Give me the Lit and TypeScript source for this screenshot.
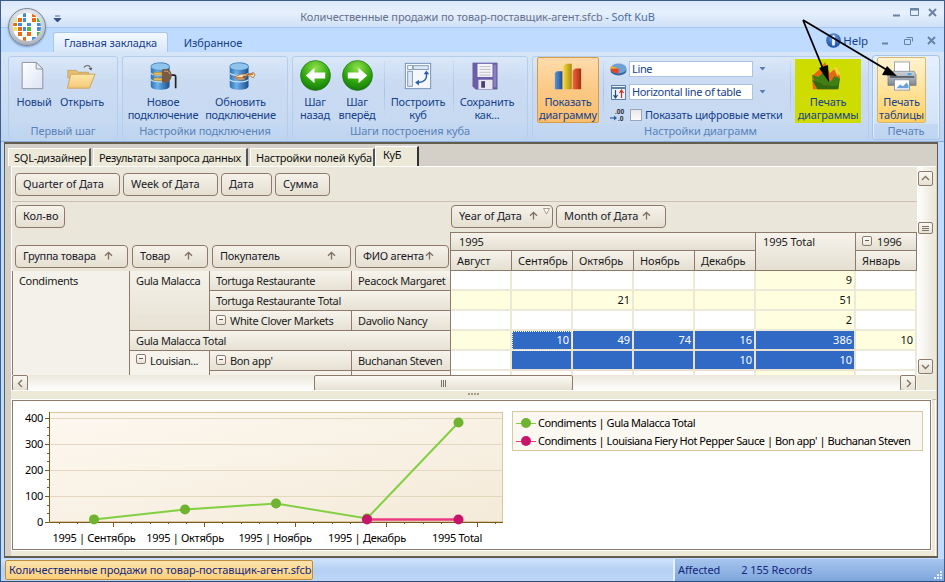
import { LitElement, html, css, svg } from "lit";
import { customElement } from "lit/decorators.js";

const icoNew = html`<svg class="ico" viewBox="0 0 32 32"><defs><linearGradient id="dg" x1="0" y1="0" x2="1" y2="1"><stop offset="0" stop-color="#fff"/><stop offset="1" stop-color="#dbe4f4"/></linearGradient></defs><path d="M5.5 1.5h15l7 7v21h-22z" fill="url(#dg)" stroke="#8a8f9a"/><path d="M20.5 1.5v7h7z" fill="#e8edf6" stroke="#8a8f9a"/></svg>`;
const icoOpen = html`<svg class="ico" viewBox="0 0 32 32"><defs><linearGradient id="fg" x1="0" y1="0" x2="0" y2="1"><stop offset="0" stop-color="#ffe7a8"/><stop offset="1" stop-color="#f3c877"/></linearGradient></defs><path d="M2 10h9l2 2h11v6H2z" fill="#e9bf6f" stroke="#c9a25e"/><path d="M5 14h26l-6 15H1.500z" fill="url(#fg)" stroke="#c9a25e"/><path d="M19 7c2-3 6-3 7 0" fill="none" stroke="#666" stroke-width="1.200"/><path d="M24 8l4-1-1 3z" fill="#555"/></svg>`;
const cyl = svg`<path d="M3 6c0-6 20-6 20 0v21c0 5-20 5-20 0z" fill="url(#cy)"/><ellipse cx="13" cy="6" rx="10" ry="4" fill="#8fc4ef" stroke="#2e6ca8" stroke-width=".5"/><path d="M3 13c4 3 16 3 20 0M3 20c4 3 16 3 20 0" fill="none" stroke="#cfe6fa" stroke-width="1.200"/>`;
const cyDefs = svg`<defs><linearGradient id="cy" x1="0" y1="0" x2="1" y2="0"><stop offset="0" stop-color="#2d71b5"/><stop offset=".35" stop-color="#6db1ea"/><stop offset="1" stop-color="#174f90"/></linearGradient></defs>`;
const icoPlug = html`<svg class="ico" viewBox="0 0 32 32">${cyDefs}${cyl}<path d="M6 12h9v3H6zM6 18h9v3H6z" fill="#e6bd5c" stroke="#8c6a1e" stroke-width=".5"/><path d="M15 9c8-2 11 3 10 8s-5 7-10 6z" fill="#7b5a42"/><path d="M17 11c4-1 6 1 6 3" fill="none" stroke="#c9ab90"/><path d="M25 15h3c1 0 1.500 1 1.500 2v12" fill="none" stroke="#222" stroke-width="1.800"/></svg>`;
const icoSync = html`<svg class="ico" viewBox="0 0 32 32">${cyDefs}<g transform="translate(1 0)">${cyl}</g><path d="M9 17l7-3h10l3-2 2 3-2 3-3-2H18l2 4-7 0-4-3z" fill="#f0e3c8" stroke="#a0622a" stroke-width=".8"/><path d="M11 18h9l4-4h5" fill="none" stroke="#b35c1e" stroke-width="1.300"/></svg>`;
const arrowBall = (dir: number) => html`<svg class="ball" viewBox="0 0 32 32"><defs><radialGradient id="b${dir}" cx=".5" cy=".25" r=".85"><stop offset="0" stop-color="#8fe04a"/><stop offset=".55" stop-color="#2ea50e"/><stop offset="1" stop-color="#0c6a08"/></radialGradient></defs><circle cx="16" cy="16" r="15.500" fill="url(#b${dir})" stroke="#1a6a14" stroke-width=".6"/><path d="M${dir < 0 ? "6 16l9-8v5h11v6H15v5z" : "26 16l-9-8v5H6v6h11v5z"}" fill="#fff"/></svg>`;
const icoBuild = html`<svg class="ico" viewBox="0 0 32 32"><rect x="2.500" y="2.500" width="27" height="27" fill="#f4f8fe" stroke="#6f8db5"/><rect x="5" y="5" width="5" height="4" fill="#fff" stroke="#7f97b8"/><rect x="11" y="5" width="16" height="4" fill="#dce8f7" stroke="#7f97b8"/><rect x="5" y="11" width="5" height="16" fill="#dce8f7" stroke="#7f97b8"/><path d="M25 13c1 7-3 10-9 10" fill="none" stroke="#2a5ea8" stroke-width="1.600"/><path d="M25 10l-3 4h6zM13 23l4-3v6z" fill="#2a5ea8"/></svg>`;
const icoSave = html`<svg class="ico" viewBox="0 0 32 32"><path d="M3 2h26v28H6l-3-3z" fill="#6a5fa8" stroke="#5b5090" stroke-width=".5"/><rect x="8" y="3" width="16" height="14" fill="#f5f5f8"/><path d="M10 6h12M10 9h12M10 12h12M10 15h12" stroke="#b9b9c6"/><rect x="9" y="20" width="15" height="10" fill="#e6e6ee"/><rect x="12" y="21.500" width="4" height="7" fill="#4a4070"/><rect x="25" y="4" width="3" height="24" fill="#8a7fc0"/></svg>`;
const icoBars = html`<svg class="ico" viewBox="0 0 32 32"><defs><linearGradient id="bb" x1="0" x2="1"><stop offset="0" stop-color="#5a94d6"/><stop offset="1" stop-color="#1f4f90"/></linearGradient><linearGradient id="by" x1="0" x2="1"><stop offset="0" stop-color="#f6d83a"/><stop offset="1" stop-color="#a98a10"/></linearGradient><linearGradient id="br" x1="0" x2="1"><stop offset="0" stop-color="#ef6a3a"/><stop offset="1" stop-color="#a82b10"/></linearGradient></defs><path d="M2 13l2-2h6v19H2z" fill="url(#bb)"/><path d="M11 5l3-2h6v27h-9z" fill="url(#by)"/><path d="M21 10l3-2h6v22h-9z" fill="url(#br)"/></svg>`;
const icoMount = html`<svg class="ico" viewBox="0 0 32 32"><path d="M10 8l5-7 5 12 6-5 5 9-5 13H2L1 16z" fill="#e36a12"/><path d="M24 7l3-1 4 7-3 3z" fill="#f5d23a"/><path d="M1 15l7 2 5-5 8 10 4-6 6 3-2 11-5-1-9-4-10-1z" fill="#3f7f14"/><path d="M1 20l12 5 10 2 5-1 2-5-1 9H7z" fill="#2f6a10"/></svg>`;
const icoPrint = html`<svg class="ico" viewBox="0 0 32 32"><defs><linearGradient id="pg" x1="0" y1="0" x2="0" y2="1"><stop offset="0" stop-color="#cfd3d8"/><stop offset="1" stop-color="#7c8590"/></linearGradient></defs><rect x="8" y="1" width="16" height="11" fill="#fff" stroke="#9aa1aa"/><path d="M3 11h26l2 4v11H1V15z" fill="url(#pg)" stroke="#676e78" stroke-width=".6"/><rect x="3" y="16" width="26" height="2" fill="#59616b"/><rect x="22" y="13" width="4" height="2" fill="#39a2e0"/><rect x="8" y="20" width="16" height="11" fill="#fff" stroke="#8a95a5"/><path d="M10 29l4-4 3 2 4-4 2 3v3z" fill="#6aa0d8"/></svg>`;
const icoPie = html`<svg class="mini" viewBox="0 0 17 13"><ellipse cx="8.500" cy="7.500" rx="8" ry="5" fill="#34689f"/><ellipse cx="8.500" cy="5.500" rx="8" ry="5" fill="#6f9fd4"/><path d="M8.500 5.500L.5 5.500a8 5 0 0 0 8 5z" fill="#e8431c"/><path d="M8.500 5.500L1.500 3a8 5 0 0 0-1 2.500z" fill="#f5b01c"/></svg>`;
const icoHoriz = html`<svg class="mini" viewBox="0 0 15 15"><rect x=".5" y=".5" width="14" height="14" fill="#eaf2fc" stroke="#5f7ea8"/><path d="M1 3h13" stroke="#5f7ea8" stroke-width="2"/><path d="M4.500 5v8M2.500 10l2 3 2-3" fill="none" stroke="#23498a" stroke-width="1.200"/><path d="M10.500 13V5M8.500 8l2-3 2 3" fill="none" stroke="#c92b1a" stroke-width="1.200"/></svg>`;
const icoDec = html`<svg class="mini" viewBox="0 0 17 15"><text x="5" y="6.500" class="dec">.00</text><text x="8" y="14" class="dec">.0</text><path d="M0 11h5" stroke="#2a5ea8" stroke-width="1.200"/><path d="M4 8.500l3 2.500-3 2.500z" fill="#2a5ea8"/></svg>`;
const icoInfo = html`<svg class="info" viewBox="0 0 15 15"><defs><radialGradient id="ig" cx=".5" cy=".3" r=".8"><stop offset="0" stop-color="#6ca4ea"/><stop offset="1" stop-color="#0f3e9a"/></radialGradient></defs><circle cx="7.500" cy="7.500" r="7.300" fill="url(#ig)"/><circle cx="7.500" cy="3.700" r="1.400" fill="#fff"/><rect x="6.200" y="6" width="2.600" height="6.500" fill="#fff"/></svg>`;
const dd = html`<svg class="dd" viewBox="0 0 7 6"><path d="M.5 1h6L3.500 4.500z" fill="#567db1"/></svg>`;
const up = html`<svg class="up" viewBox="0 0 9 9"><path d="M4.500 8.500V1.500M1 4.800l3.500-3.500L8 4.800" fill="none" stroke="#7d6f62" stroke-width="1.300"/></svg>`;
const minus = html`<span class="minus"></span>`;
const orbColors = ["#f6e05a", "#fff", "#3f8fd8", "#fff", "#e96a12", "#fff", "#f6e05a", "#e96a12", "#3f8fd8", "#fff", "#e96a12", "#4fb53a", "#e96a12", "#3f8fd8", "#fff", "#3f8fd8", "#fff", "#3f8fd8", "#f6e05a", "#e96a12", "#3f8fd8", "#4fb53a", "#fff", "#3f8fd8", "#fff", "#e96a12", "#fff", "#e96a12", "#fff", "#4fb53a", "#3f8fd8", "#fff", "#e96a12", "#fff", "#3f8fd8", "#fff"];

const item = (ic: unknown, a: string, b: string, cls = "") => html`<button class="rb ${cls}">${ic}<span class="lbl">${a}<br />${b}</span></button>`;
const sep = html`<i class="vsep"></i>`;
const gridRows: Array<Array<[string, string]>> = [
  [["", ""], ["", ""], ["", ""], ["", ""], ["", ""], ["9", "y"], ["", ""]],
  [["", "y"], ["", "y"], ["21", "y"], ["", "y"], ["", "y"], ["51", "y"], ["", "y"]],
  [["", ""], ["", ""], ["", ""], ["", ""], ["", ""], ["2", "y"], ["", ""]],
  [["", "y"], ["10", "s f"], ["49", "s"], ["74", "s"], ["16", "s"], ["386", "s"], ["10", "y"]],
  [["", ""], ["", "s"], ["", "s"], ["", "s"], ["10", "s"], ["10", "s"], ["", ""]],
  [["", ""], ["", ""], ["", ""], ["", ""], ["", ""], ["", "y"], ["", ""]],
];

@customElement("app-root")
export class AppRoot extends LitElement {
  static styles = css`
    :host { display: block; width: 945px; height: 582px; overflow: hidden; font: 11px/13px "Noto Sans", "Open Sans", sans-serif; letter-spacing: -.1px; color: #1c1c1c; }
    * { box-sizing: border-box; }
    button { font: inherit; letter-spacing: inherit; background: none; border: 0; padding: 0; color: inherit; }
    .win { position: relative; width: 945px; height: 582px; display: flex; flex-direction: column; background: #bfdbff; border: 1px solid #3d5d8a; border-bottom-color: #2c4c78; overflow: hidden; }
    .title { height: 27px; flex: none; display: flex; align-items: center; background: linear-gradient(#dbe8fa, #e6f0fd 45%, #cfe0f7); border-bottom: 1px solid #a9c8ef; }
    .title .t { flex: 1; text-align: center; padding: 5px 0 0 62px; color: #66708c; }
    .title .t b { font-weight: 400; color: #4d6f9f; }
    .qa { position: absolute; left: 52px; top: 14px; width: 9px; height: 9px; z-index: 3; }
    .ctl { display: flex; gap: 9px; padding: 0 7px 4px 0; }
    .ctl svg { width: 9px; height: 9px; display: block; }
    .orb { position: absolute; left: 7px; top: 7px; width: 38px; height: 38px; border-radius: 50%; background: radial-gradient(circle at 50% 30%, #fdfdfd, #c6cdd8 60%, #8a92a0); border: 1px solid #7d8794; display: grid; place-items: center; box-shadow: 0 1px 2px #7797c0; z-index: 3; }
    .orbin { width: 28px; height: 28px; display: grid; grid-template-columns: repeat(6, 1fr); grid-template-rows: repeat(6, 1fr); gap: 1px; border-radius: 50%; overflow: hidden; background: #fff; }
    .tabs { height: 24px; flex: none; display: flex; align-items: flex-end; padding-left: 52px; background: #bfdbff; position: relative; }
    .rtab { height: 20px; display: flex; align-items: center; justify-content: center; color: #15428b; }
    .rtab.on { width: 115px; color: #15428b; background: linear-gradient(#f4f9ff, #d9e7f9); border: 1px solid #a7c5ec; border-bottom: 0; border-radius: 3px 3px 0 0; }
    .rtab.off { width: 90px; margin-left: 0; }
    .help { margin-left: auto; align-self: center; display: flex; align-items: center; gap: 2px; color: #15428b; font-size: 11.500px; padding-right: 8px; padding-top: 1px; }
    .info { width: 15px; height: 15px; margin-right: 0; }
    .ctl2 { display: flex; gap: 14px; margin-left: 11px; }
    .ctl2 svg { width: 9px; height: 9px; display: block; }
    .ribbon { height: 90px; flex: none; display: flex; padding: 4px 0 0 7px; background: linear-gradient(#d6e5f8, #c9dcf4 60%, #bcd4f2); border-bottom: 1px solid #8faed6; }
    .grp { height: 83px; margin-right: 4px; border: 1px solid #b4cdea; border-radius: 3px; display: flex; flex-direction: column; background: linear-gradient(#dae7f8, #cadbf2 30%, #c5d9f1); }
    .grp.hi { border-color: #e4f0fe; background: linear-gradient(#e6f0fd, #cfe0f6); box-shadow: 0 0 0 1px #a6c4ea; }
    .g1 { width: 110px; } .g2 { width: 166px; } .g3 { width: 236px; } .g4 { width: 337px; } .g5 { width: 66px; margin-right: 0; }
    .body { height: 67px; flex: none; display: flex; align-items: stretch; padding: 1px 1px 0; }
    .cap { height: 15px; flex: none; background: linear-gradient(#c4d8f2, #bed4ef); text-align: center; color: #5a82b8; line-height: 14px; border-radius: 0 0 3px 3px; }
    .rb { display: flex; flex-direction: column; align-items: center; color: #15428b; text-align: center; white-space: nowrap; flex: none; letter-spacing: -.2px; }
    .ico { width: 30px; height: 30px; margin-top: 3px; display: block; flex: none; }
    .ball { width: 31px; height: 31px; margin-top: 2px; display: block; flex: none; }
    .lbl { height: 26px; margin-top: 4px; display: block; }
    .w1 { width: 46px; margin-left: 1px; } .w2 { width: 50px; }
    .w1 .ico { margin-right: 4px; } .w2 .ico { margin-right: 3px; }
    .w3 { width: 72px; margin-left: 3px; } .w4 { width: 75px; margin-left: 4px; }
    .w5 { width: 38px; margin-left: 2px; } .w6 { width: 44px; margin: 0 3px 0 1px; } .w7 { width: 62px; margin-right: 2px; } .w8 { width: 62px; }
    .w8 .ico { margin-right: 4px; }
    .vsep { width: 1px; margin: 3px 2px 3px 2px; background: linear-gradient(#c9dcf4, #a9c4e6, #c9dcf4); flex: none; }
    .sh { width: 62px; height: 66px; margin: -1px 2px 0 3px; border: 1px solid #d79b4a; border-radius: 2px; background: linear-gradient(#fddcab, #fbc985 50%, #f9bf6f); }
    .lime { width: 66px; height: 64px; margin: 1px 0 0 2px; background: #cfdc00; color: #15428b; }
    .lime .ico { margin: 2px 4px 0 0; }
    .pr { width: 49px; height: 66px; margin: -1px 0 0 2px; border: 1px solid #d5b872; border-radius: 2px; background: linear-gradient(#fff3cf, #ffe39a 50%, #ffcf5f); }
    .opts { width: 182px; flex: none; display: flex; flex-direction: column; padding: 3px 0 0 4px; }
    .orow { display: flex; align-items: center; height: 16px; margin-bottom: 7px; gap: 2px; }
    .mini { width: 17px; height: 15px; flex: none; }
    .dec { font-size: 6.500px; font-weight: 700; fill: #333; letter-spacing: 0; }
    .inp { width: 124px; height: 16px; background: #fff; border: 1px solid #abc4e3; color: #15428b; padding-left: 2px; line-height: 14px; letter-spacing: -.35px; }
    .dd { width: 7px; height: 6px; margin-left: 4px; }
    .chk { width: 12px; height: 12px; background: linear-gradient(#e8e8e8, #fbfbfb); border: 1px solid #9aa7b8; flex: none; margin-left: 1px; }
    .chklbl { color: #15428b; white-space: nowrap; letter-spacing: -.2px; margin-left: 1px; }
    .main { flex: 1; margin: 0 6px 1px 3px; border: 1px solid #655c50; border-bottom-width: 2px; border-top-width: 2px; background: #d4d0c8; padding: 2px 0 0 3px; display: flex; flex-direction: column; min-height: 0; }
    .dtabs { height: 20px; flex: none; display: flex; gap: 2px; align-items: flex-end; letter-spacing: -.25px; }
    .dt { height: 18px; background: #ece9d8; border: 1px solid #fff; border-right: 2px solid #555; border-bottom: 0; padding: 0 0 0 5px; display: flex; align-items: center; white-space: nowrap; color: #111; }
    .dt1 { width: 83px; } .dt2 { width: 155px; } .dt3 { width: 125px; }
    .dt4 { width: 44px; height: 20px; margin-left: -2px; padding: 0 0 4px 7px; border-right: 2px solid #333; }
    .panel { height: 224px; flex: none; margin-left: 3px; width: 925px; display: grid; grid-template-columns: 905px 16px; grid-template-rows: 208px 16px; background: #ece9d8; border-left: 1px solid #fff; border-top: 1px solid #fff; padding-right: 3px; }
    .pv { overflow: hidden; display: flex; flex-direction: column; background: #ebe6da; }
    .filt { height: 35px; flex: none; padding: 6px 0 0 3px; display: grid; grid-template-columns: 105px 95px 51px 55px; gap: 3px; border-bottom: 1px solid #cbc0b3; }
    .filt .fb { height: 23px; }
    .fb { height: 23px; display: flex; align-items: center; justify-content: space-between; padding: 0 14px 2px 7px; background: linear-gradient(#f5f2ea, #e5dfd1); border: 1px solid #8d7a6a; border-radius: 4px; white-space: nowrap; color: #1a1a2a; position: relative; }
    .up { width: 9px; height: 9px; flex: none; }
    .mid { height: 69px; flex: none; display: grid; grid-template-columns: 438px 467px; }
    .ml { padding: 3px 0 3px 3px; display: flex; flex-direction: column; justify-content: space-between; }
    .kol { width: 50px; }
    .rf { display: grid; grid-template-columns: 113px 76px 139px 94px; gap: 4px; letter-spacing: -.25px; }
    .cf { height: 30px; padding: 3px 0 0 1px; display: grid; grid-template-columns: 102px 110px; gap: 3px; }
    .flt { position: absolute; right: 2px; top: 2px; width: 7px; height: 7px; }
    .hd { display: grid; grid-template-columns: 62px repeat(4, 61px) 100px 61px; grid-template-rows: 18px 20px; border-top: 1px solid #8d7a6a; }
    .h { background: linear-gradient(#f6f3ec, #e4dfd1); border-right: 1px solid #8d7a6a; border-bottom: 1px solid #8d7a6a; padding: 0 0 1px 6px; display: flex; align-items: center; white-space: nowrap; overflow: hidden; gap: 5px; }
    .h.y { grid-column: 1 / span 5; padding-left: 8px; }
    .h.t { grid-row: 1 / span 2; grid-column: 6; align-items: flex-start; padding: 2px 0 0 7px; }
    .h.l { border-left: 1px solid #8d7a6a; }
    .rows { height: 104px; flex: none; overflow: hidden; display: grid; grid-template-columns: 118px 80px 142px 99px repeat(5, 61px) 100px 61px; grid-auto-rows: 20px; background: #fff; letter-spacing: -.35px; }
    .c { border-right: 1px solid #8d7a6a; border-bottom: 1px solid #8d7a6a; background: linear-gradient(#f7f4ed, #e6e1d3); padding: 0 0 1px 6px; display: flex; align-items: center; white-space: nowrap; overflow: hidden; gap: 4px; height: 100%; }
    .c.top { align-items: flex-start; padding-top: 3px; }
    .c0 { grid-column: 1; grid-row: 1 / span 6; background: #f3f1e9; border-left: 1px solid #8d7a6a; }
    .c1a { grid-column: 2; grid-row: 1 / span 3; background: linear-gradient(#f5f2ea, #e6e1d3); }
    .c1b { grid-column: 2 / span 3; grid-row: 4; }
    .c1c { grid-column: 2; grid-row: 5 / span 2; background: #f5f3ec; align-items: flex-start; padding-top: 3px; }
    .c2s { grid-column: 3 / span 2; }
    .minus { width: 10px; height: 10px; flex: none; border: 1px solid #8d7a6a; border-radius: 2px; background: linear-gradient(#fff, #e8e3d8); position: relative; }
    .minus::after { content: ""; position: absolute; left: 2px; right: 2px; top: 3px; height: 1px; background: #6a5d50; }
    .d { border-right: 2px solid #ece9d8; border-bottom: 2px solid #ece9d8; background: #fff; color: #111; text-align: right; padding: 0 2px 0 0; line-height: 18px; height: 20px; letter-spacing: 0; }
    .d.y { background: #ffffe0; }
    .d.s { background: #316ac5; color: #fff; border-color: #e8e0d0; }
    .d.f { outline: 1px dotted #fff; outline-offset: -1px; }
    .vs { background: linear-gradient(90deg, #fff, #ece8dc); display: flex; flex-direction: column; padding: 4px 0 1px 1px; }
    .sb { width: 16px; height: 16px; flex: none; border: 1px solid #8d7a6a; border-radius: 2px; background: linear-gradient(#faf8f3, #e6e1d3); display: grid; place-items: center; }
    .vs .sb { width: 15px; height: 15px; }
    .sb svg { width: 9px; height: 7px; }
    .vt { height: 36px; flex: none; } .vt2 { flex: 1; }
    .vth { height: 12px; flex: none; border: 1px solid #8d7a6a; border-radius: 2px; background: linear-gradient(#faf8f3, #e6e1d3); display: grid; place-items: center; }
    .vth i, .hth i { display: block; background: repeating-linear-gradient(#7d7166 0 1px, transparent 1px 2px); width: 7px; height: 5px; }
    .hth i { background: repeating-linear-gradient(90deg, #7d7166 0 1px, transparent 1px 2px); width: 5px; height: 7px; }
    .hs { display: flex; background: linear-gradient(#ece8dc, #fff); height: 16px; padding-right: 1px; }
    .hsp { width: 286px; flex: none; } .hsp2 { flex: 1; }
    .hth { width: 259px; height: 16px; flex: none; border: 1px solid #8d7a6a; border-radius: 2px; background: linear-gradient(#faf8f3, #e6e1d3); display: grid; place-items: center; }
    .cor { background: #ece9d8; }
    .split { height: 10px; flex: none; margin-left: 3px; width: 925px; background: #ece9d8; border-top: 1px solid #fff; border-bottom: 1px solid #c8c3b6; display: flex; justify-content: center; align-items: center; gap: 1px; padding-bottom: 3px; }
    .split i { width: 2px; height: 2px; background: #a89c8c; }
    .chartwrap { flex: none; margin-left: 3px; width: 925px; height: 156px; background: #ece9d8; padding: 0 4px 6px 1px; border-right: 1px solid #fff; }
    .chart { height: 150px; background: #fff; border: 1px solid #8d7a6a; position: relative; outline: 1px solid #fff; }
    .chart svg { display: block; position: absolute; left: 0; top: 0; }
    .ax { font: 11px "Noto Sans", "Open Sans", sans-serif; letter-spacing: -.3px; fill: #000; }
    .leg { position: absolute; left: 499px; top: 10px; width: 411px; height: 40px; background: #fbf7f1; border: 1px solid #d8c9a4; padding: 2px 0 0 25px; color: #000; line-height: 18px; white-space: nowrap; letter-spacing: -.44px; }
    .leg div { position: relative; height: 18px; }
    .leg i { position: absolute; left: -22px; top: 9px; width: 20px; height: 1px; }
    .leg b { position: absolute; left: -17px; top: 4px; width: 10px; height: 10px; border-radius: 50%; }
    .status { height: 22px; flex: none; display: flex; align-items: stretch; margin-top: auto; background: linear-gradient(#cfe2fb, #b5d0f3 50%, #bcd6f7); }
    .sdoc { width: 308px; height: 20px; margin-left: 4px; margin-top: 1px; border: 1px solid #c28b3c; border-radius: 2px; background: linear-gradient(#fde3ad, #fbcf7c); color: #15287b; display: flex; align-items: center; padding: 0 0 2px 3px; white-space: nowrap; }
    .sfill { flex: 1; }
    .sinfo { width: 271px; border-left: 2px solid #e6f0fd; background: linear-gradient(#a7c5ee, #7ea6dd); color: #15287b; display: flex; align-items: center; padding: 0 0 2px 3px; position: relative; }
    .sinfo span + span { margin-left: 21px; }
    .grip { position: absolute; right: 1px; bottom: 1px; width: 11px; height: 11px; }
    .over { position: absolute; left: -1px; top: -1px; width: 945px; height: 582px; pointer-events: none; z-index: 4; }
  `;

  render() {
    const chart = svg`
      <svg width="921" height="150" viewBox="12 401 921 150">
        <defs><linearGradient id="pl" x1="0" y1="0" x2="1" y2="1"><stop offset="0" stop-color="#fdf8f0"/><stop offset="1" stop-color="#f4ead9"/></linearGradient></defs>
        <rect x="48.500" y="412.500" width="453" height="109" fill="url(#pl)" stroke="#d8c79f"/>
        ${[418, 444, 470, 496].map((y) => svg`<path d="M48 ${y + 0.5}h453" stroke="#e3d8bf"/>`)}
        <path d="M48.500 412v110.500H502" fill="none" stroke="#7e5a1c" stroke-width="1"/>
        ${[418, 444, 470, 496, 522].map((y) => svg`<path d="M44 ${y + 0.5}h4" stroke="#7e5a1c"/>`)}
        ${[426.700, 435.300, 452.700, 461.300, 478.700, 487.300, 504.700, 513.300].map((y) => svg`<path d="M46 ${Math.round(y) + 0.5}h2" stroke="#7e5a1c"/>`)}
        ${Array.from({ length: 25 }, (_, i) => 57.500 + i * 18.200).map((x, i) => svg`<path d="M${Math.round(x) + 0.5} 522v${(i + 2) % 5 === 0 ? 5 : 2}" stroke="#7e5a1c"/>`)}
        ${[["400", 418], ["300", 444], ["200", 470], ["100", 496], ["0", 522]].map(([t, y]) => svg`<text class="ax" x="42" y="${(y as number) + 4}" text-anchor="end">${t}</text>`)}
        ${["1995 | Сентябрь", "1995 | Октябрь", "1995 | Ноябрь", "1995 | Декабрь", "1995 Total"].map((t, i) => svg`<text class="ax" x="${[93, 184, 274, 366, 456][i]}" y="542" text-anchor="middle">${t}</text>`)}
        <polyline points="93,519.400 184,509.500 275,503.500 366,518.500 457.500,422.500" fill="none" stroke="#83cf42" stroke-width="2"/>
        ${[[93, 519.400], [184, 509.500], [275, 503.500], [366, 518.500], [457.500, 422.500]].map(([x, y]) => svg`<circle cx="${x}" cy="${y}" r="5" fill="#6fb32f"/>`)}
        <path d="M366 519.500H457.500" stroke="#ec3a82" stroke-width="2.500"/>
        <circle cx="366" cy="519.500" r="5" fill="#c8146a"/><circle cx="457.500" cy="519.500" r="5" fill="#c8146a"/>
      </svg>`;
    return html`<div class="win">
      <div class="title">
        <div class="t">Количественные продажи по товар-поставщик-агент.sfcb <b>- Soft KuB</b></div>
        <div class="ctl">
          <svg viewBox="0 0 9 9"><path d="M1 7.500h7" stroke="#6b83a5" stroke-width="2"/></svg>
          <svg viewBox="0 0 9 9"><path d="M.5.5h8v7h-8z" fill="none" stroke="#6b83a5"/><path d="M0 1.500h9" stroke="#6b83a5" stroke-width="2"/></svg>
          <svg viewBox="0 0 9 9"><path d="M1 1l7 7M8 1l-7 7" stroke="#6b83a5" stroke-width="2"/></svg>
        </div>
      </div>
      <svg class="qa" viewBox="0 0 9 9"><path d="M2 1h5M1 3.500h7L4.500 7z" stroke="#2a4a80" fill="#2a4a80" stroke-width=".8"/></svg>
      <div class="orb"><div class="orbin">${orbColors.map((c) => html`<i style="background:${c}"></i>`)}</div></div>
      <div class="tabs">
        <div class="rtab on">Главная закладка</div>
        <div class="rtab off">Избранное</div>
        <div class="help">${icoInfo}<span>Help</span>
          <div class="ctl2">
            <svg viewBox="0 0 9 9"><path d="M1 7.500h6" stroke="#6b83a5" stroke-width="2"/></svg>
            <svg viewBox="0 0 9 9"><path d="M2.500 1.500h6v4M.5 3.500h6v5h-6z" fill="none" stroke="#6b83a5"/></svg>
            <svg viewBox="0 0 9 9"><path d="M1 1l7 7M8 1l-7 7" stroke="#6b83a5" stroke-width="2"/></svg>
          </div>
        </div>
      </div>
      <div class="ribbon">
        <div class="grp g1"><div class="body">${item(icoNew, "Новый", "", "w1")}${item(icoOpen, "Открыть", "", "w2")}</div><div class="cap">Первый шаг</div></div>
        <div class="grp g2"><div class="body">${item(icoPlug, "Новое", "подключение", "w3")}${item(icoSync, "Обновить", "подключение", "w4")}</div><div class="cap">Настройки подключения</div></div>
        <div class="grp g3"><div class="body">${item(arrowBall(-1), "Шаг", "назад", "w5")}${item(arrowBall(1), "Шаг", "вперёд", "w6")}${sep}${item(icoBuild, "Построить", "куб", "w7")}${sep}${item(icoSave, "Сохранить", "как...", "w8")}</div><div class="cap">Шаги построения куба</div></div>
        <div class="grp g4"><div class="body">
          ${item(icoBars, "Показать", "диаграмму", "sh")}${sep}
          <div class="opts">
            <div class="orow">${icoPie}<span class="inp">Line</span>${dd}</div>
            <div class="orow">${icoHoriz}<span class="inp">Horizontal line of table</span>${dd}</div>
            <div class="orow">${icoDec}<span class="chk"></span><span class="chklbl">Показать цифровые метки</span></div>
          </div>
          ${sep}${item(icoMount, "Печать", "диаграммы", "lime")}
        </div><div class="cap">Настройки диаграмм</div></div>
        <div class="grp g5 hi"><div class="body">${item(icoPrint, "Печать", "таблицы", "pr")}</div><div class="cap">Печать</div></div>
      </div>
      <div class="main">
        <div class="dtabs">
          <div class="dt dt1">SQL-дизайнер</div><div class="dt dt2">Результаты запроса данных</div><div class="dt dt3">Настройки полей Куба</div><div class="dt dt4">КуБ</div>
        </div>
        <div class="panel">
          <div class="pv">
            <div class="filt"><div class="fb">Quarter of Дата</div><div class="fb">Week of Дата</div><div class="fb">Дата</div><div class="fb">Сумма</div></div>
            <div class="mid">
              <div class="ml">
                <div class="fb kol">Кол-во</div>
                <div class="rf"><div class="fb">Группа товара ${up}</div><div class="fb">Товар ${up}</div><div class="fb">Покупатель ${up}</div><div class="fb">ФИО агента ${up}</div></div>
              </div>
              <div>
                <div class="cf">
                  <div class="fb">Year of Дата ${up}<svg class="flt" viewBox="0 0 7 7"><path d="M.5.5h6L3.500 6z" fill="#fff" stroke="#a89c8c"/></svg></div>
                  <div class="fb">Month of Дата ${up}</div>
                </div>
                <div class="hd">
                  <div class="h y l">1995</div><div class="h t">1995 Total</div><div class="h">${minus}1996</div>
                  <div class="h l">Август</div><div class="h">Сентябрь</div><div class="h">Октябрь</div><div class="h">Ноябрь</div><div class="h">Декабрь</div><div class="h">Январь</div>
                </div>
              </div>
            </div>
            <div class="rows">
              <div class="c c0 top">Condiments</div>
              <div class="c c1a top">Gula Malacca</div>
              <div class="c" style="grid-row:1;grid-column:3">Tortuga Restaurante</div>
              <div class="c" style="grid-row:1;grid-column:4">Peacock Margaret</div>
              <div class="c c2s" style="grid-row:2">Tortuga Restaurante Total</div>
              <div class="c" style="grid-row:3;grid-column:3">${minus}White Clover Markets</div>
              <div class="c" style="grid-row:3;grid-column:4">Davolio Nancy</div>
              <div class="c c1b">Gula Malacca Total</div>
              <div class="c c1c">${minus}Louisian...</div>
              <div class="c" style="grid-row:5;grid-column:3">${minus}Bon app'</div>
              <div class="c" style="grid-row:5;grid-column:4">Buchanan Steven</div>
              <div class="c" style="grid-row:6;grid-column:3"></div>
              <div class="c" style="grid-row:6;grid-column:4"></div>
              ${gridRows.map((r, i) => r.map(([v, cls], j) => html`<div class="d ${cls}" style="grid-row:${i + 1};grid-column:${j + 5}">${v}</div>`))}
            </div>
          </div>
          <div class="vs">
            <div class="sb"><svg viewBox="0 0 9 7"><path d="M1 5l3.500-3.500L8 5" fill="none" stroke="#7d6f62" stroke-width="1.300"/></svg></div>
            <div class="vt"></div><div class="vth"><i></i></div><div class="vt2"></div>
            <div class="sb"><svg viewBox="0 0 9 7"><path d="M1 2l3.500 3.500L8 2" fill="none" stroke="#7d6f62" stroke-width="1.300"/></svg></div>
          </div>
          <div class="hs">
            <div class="sb"><svg viewBox="0 0 9 7" style="transform:rotate(-90deg)"><path d="M1 5l3.500-3.500L8 5" fill="none" stroke="#7d6f62" stroke-width="1.300"/></svg></div>
            <div class="hsp"></div><div class="hth"><i></i></div><div class="hsp2"></div>
            <div class="sb"><svg viewBox="0 0 9 7" style="transform:rotate(90deg)"><path d="M1 5l3.500-3.500L8 5" fill="none" stroke="#7d6f62" stroke-width="1.300"/></svg></div>
          </div>
          <div class="cor"></div>
        </div>
        <div class="split"><i></i><i></i><i></i><i></i></div>
        <div class="chartwrap"><div class="chart">${chart}
          <div class="leg">
            <div><i style="background:#83cf42"></i><b style="background:#6fb32f"></b>Condiments | Gula Malacca Total</div>
            <div><i style="background:#ec3a82"></i><b style="background:#c8146a"></b>Condiments | Louisiana Fiery Hot Pepper Sauce | Bon app' | Buchanan Steven</div>
          </div>
        </div></div>
      </div>
      <div class="status">
        <div class="sdoc">Количественные продажи по товар-поставщик-агент.sfcb</div>
        <div class="sfill"></div>
        <div class="sinfo"><span>Affected</span><span>2 155 Records</span>
          <svg class="grip" viewBox="0 0 11 11"><path d="M8 2h2v2H8zM5 5h2v2H5zM8 5h2v2H8zM2 8h2v2H2zM5 8h2v2H5zM8 8h2v2H8z" fill="#e6effa"/></svg>
        </div>
      </div>
      <svg class="over" viewBox="0 0 945 582">
        <path d="M803 20L826 76M803 20L892 73" stroke="#000" stroke-width="1.800" fill="none"/>
        <path d="M829 82L819 68l9-3zM897 76l-15-1 5-9z" fill="#000"/>
      </svg>
    </div>`;
  }
}
